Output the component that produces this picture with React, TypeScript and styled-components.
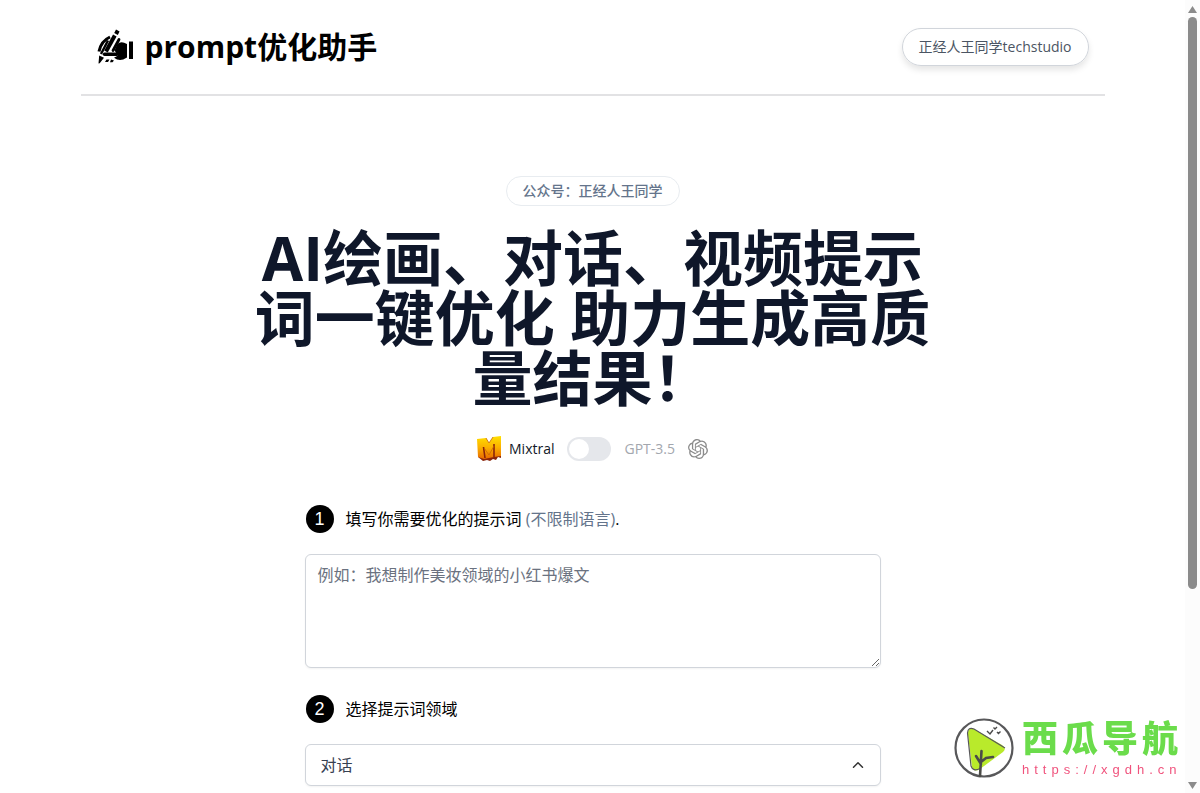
import React, { useState } from "react";
import styled, { createGlobalStyle } from "styled-components";
import { SiOpenai } from "react-icons/si";
import { ChevronUp } from "lucide-react";

const GlobalStyle = createGlobalStyle`
  *, *::before, *::after { box-sizing: border-box; }
  body {
    margin: 0;
    background: #fff;
    color: #000;
    font-family: "Open Sans", "Noto Sans CJK SC", sans-serif;
    font-size: 16px;
    line-height: 24px;
  }
  button, input, textarea, select { font: inherit; color: inherit; }
`;

const Window = styled.div`
  display: flex;
  height: 100vh;
  overflow: hidden;
`;

const Page = styled.div`
  flex: 1;
  min-width: 0;
  display: flex;
  flex-direction: column;
  align-items: center;
`;

const Header = styled.header`
  width: 100%;
  max-width: 1024px;
  display: flex;
  justify-content: space-between;
  align-items: center;
  padding: 28px 16px;
  border-bottom: 2px solid #e2e2e4;
`;

const Brand = styled.a`
  display: flex;
  align-items: center;
  gap: 12px;
  color: #000;
  text-decoration: none;
`;

const BrandName = styled.h1`
  margin: 0;
  font-size: 30px;
  line-height: 38px;
  font-weight: 700;
`;

const StudioLink = styled.a`
  display: flex;
  align-items: center;
  height: 38px;
  padding: 0 16px;
  border: 1px solid #d1d5db;
  border-radius: 999px;
  box-shadow: 0 4px 6px rgba(0, 0, 0, 0.1);
  color: #4b5563;
  font-size: 14px;
  line-height: 20px;
  text-decoration: none;
`;

const Main = styled.main`
  width: 100%;
  display: flex;
  flex-direction: column;
  align-items: center;
  padding: 80px 16px 0;
`;

const AccountPill = styled.p`
  margin: 0 0 22px;
  padding: 4px 16px;
  border: 1px solid #e8ecf0;
  border-radius: 999px;
  color: #64748b;
  font-size: 14px;
  line-height: 20px;
  font-weight: 500;
`;

const Headline = styled.h2`
  margin: 0;
  max-width: 708px;
  color: #0f172a;
  font-size: 60px;
  line-height: 60px;
  font-weight: 700;
  text-align: center;
`;

const ModelPicker = styled.div`
  display: flex;
  align-items: center;
  height: 24px;
  margin-top: 29px;
  gap: 13px;
  font-size: 14px;
`;

const ModelName = styled.label<{ $active: boolean; $gap: number }>`
  display: flex;
  align-items: center;
  gap: ${(p) => p.$gap}px;
  color: ${(p) => (p.$active ? "#111827" : "#a3a7ae")};
  svg { color: #8b8b8b; }
`;

const Switch = styled.input`
  appearance: none;
  width: 44px;
  height: 24px;
  margin: 0;
  padding: 2px;
  border-radius: 12px;
  background: #e5e7eb;
  cursor: pointer;
  &::before {
    content: "";
    display: block;
    width: 20px;
    height: 20px;
    border-radius: 50%;
    background: #fff;
  }
  &:checked::before { margin-left: 20px; }
`;

const Form = styled.form`
  width: 100%;
  max-width: 576px;
  display: flex;
  flex-direction: column;
  margin-top: 44px;
`;

const StepLabel = styled.label`
  display: flex;
  align-items: center;
  gap: 12px;
  height: 28px;
`;

const StepNumber = styled.span`
  display: grid;
  place-items: center;
  width: 28px;
  height: 28px;
  margin-left: 1px;
  border-radius: 50%;
  background: #000;
  color: #fff;
  font-family: "Liberation Sans", sans-serif;
  font-size: 18px;
`;

const Hint = styled.span`
  color: #64748b;
`;

const PromptBox = styled.textarea`
  height: 114px;
  margin: 21px 0 27px;
  padding: 8px 12px;
  border: 1px solid #d1d5db;
  border-radius: 6px;
  background: #fff;
  box-shadow: 0 1px 2px rgba(0, 0, 0, 0.05);
  resize: vertical;
  &::placeholder { color: #6b7280; opacity: 1; }
`;

const SelectWrap = styled.div`
  display: grid;
  align-items: center;
  margin-top: 21px;
  > * { grid-area: 1 / 1; }
  > svg {
    justify-self: end;
    margin-right: 14px;
    pointer-events: none;
  }
`;

const Select = styled.select`
  appearance: none;
  width: 100%;
  height: 42px;
  padding: 0 15px;
  border: 1px solid #d1d5db;
  border-radius: 6px;
  background: #fff;
  box-shadow: 0 1px 2px rgba(0, 0, 0, 0.05);
  color: #374151;
`;

const ScrollTrack = styled.div`
  width: 15px;
  display: flex;
  flex-direction: column;
  align-items: center;
  padding: 6px 0 4px;
  background: #fcfcfc;
`;

const ScrollThumb = styled.div`
  width: 9px;
  height: 73%;
  margin: 4px 0 auto;
  border-radius: 5px;
  background: #8b8b8b;
`;

const SiteBadge = styled.a`
  position: fixed;
  right: 18px;
  bottom: 15px;
  display: flex;
  align-items: center;
  gap: 8px;
  text-decoration: none;
`;

const BadgeText = styled.span`
  display: flex;
  flex-direction: column;
`;

const BadgeName = styled.strong`
  color: #6bdc4b;
  font-family: "Liberation Sans", "Noto Sans CJK SC", sans-serif;
  font-size: 36px;
  line-height: 44px;
  font-weight: 900;
  letter-spacing: 4px;
`;

const BadgeUrl = styled.span`
  color: #f0537d;
  font-family: "Liberation Sans", sans-serif;
  font-size: 13px;
  line-height: 16px;
  letter-spacing: 5px;
`;

const WritingHand = () => (
  <svg width="36" height="36" viewBox="0 0 36 36" aria-hidden="true">
    <g fill="none" stroke="#000">
      <path d="M20.800 1.500L19 5" strokeWidth="4" />
      <path d="M17.800 6.500L9 22.500" strokeWidth="4" />
      <path d="M13 8Q4 12 2 22.500" strokeWidth="3" />
      <path d="M11 11.500L4 25" strokeWidth="2.400" />
      <path d="M22 10.500L16 21.500" strokeWidth="2.800" strokeLinecap="round" />
      <path d="M7.500 25.300H20" strokeWidth="3.400" strokeLinecap="round" />
    </g>
    <path d="M20.500 15q3.500-3.500 9.500 0v13.500q-4 2.500-7 2.500t-6-2.200l4-2.300-3.500-5zM32 12.500h4V30h-4zM2.200 26.500L7 28.700l-4.300 5.600-1.200.2zM9.500 30.500h3l-1.500 2.500H8zM14 30.500l3 1-1.500 1.700H13z" />
  </svg>
);

const MixtralLogo = () => (
  <svg width="24" height="26" viewBox="0 0 24 26" aria-hidden="true">
    <defs>
      <linearGradient id="mixtral" x1="0" y1="0" x2="0" y2="1">
        <stop offset="0" stopColor="#ffe000" />
        <stop offset="0.5" stopColor="#fbb000" />
        <stop offset="1" stopColor="#e86a00" />
      </linearGradient>
    </defs>
    <path d="M1 19l23-3v6l-3-1-2 3-3-1-3 2-3-1-4 1-5-4z" fill="#8a240a" />
    <path d="M0 3l9-1 3 5 4-6 8-1v20l-7 1-5 1-5 1-6-2z" fill="url(#mixtral)" />
    <path d="M6.500 11l1.500 11M17 8v13" fill="none" stroke="#8a240a" strokeWidth="1.600" />
    <path d="M9 2l3 5 4-6M7 12l5 7 5-9" fill="none" stroke="#c86408" strokeWidth="0.800" />
  </svg>
);

const TreeLogo = () => (
  <svg width="60" height="60" viewBox="0 0 60 60" aria-hidden="true">
    <circle cx="30" cy="30" r="28.500" fill="#fff" stroke="#58585a" strokeWidth="2.200" />
    <path d="M20 11l28 16q5 3.500 1 7L26 51q-6 4-8-2L14 17q-.5-9 6-6z" fill="#b9ea2b" />
    <path d="M51 30L20 11q-6-2.500-6.500 4L17 48q2 6 9 2.500" fill="none" stroke="#58585a" strokeWidth="1.200" />
    <path d="M26 58l1.500-25M27 46l-5-8M27 44l5-4 7-1" fill="none" stroke="#4b4b48" strokeWidth="2.600" strokeLinecap="round" />
    <path d="M33 13l3 3 3-4M39.500 9.500l1.500 1.500 2-2M43 14l1.500 1.500 2-2" fill="none" stroke="#4b4b4b" strokeWidth="1.400" />
  </svg>
);

export default function App() {
  const [gpt, setGpt] = useState(false);
  return (
    <>
      <GlobalStyle />
      <Window>
        <Page>
          <Header>
            <Brand href="#">
              <WritingHand />
              <BrandName>prompt优化助手</BrandName>
            </Brand>
            <StudioLink href="#">正经人王同学techstudio</StudioLink>
          </Header>
          <Main>
            <AccountPill>公众号：正经人王同学</AccountPill>
            <Headline>AI绘画、对话、视频提示词一键优化 助力生成高质量结果！</Headline>
            <ModelPicker>
              <ModelName htmlFor="model" $active={!gpt} $gap={8}>
                <MixtralLogo />
                Mixtral
              </ModelName>
              <Switch id="model" type="checkbox" role="switch" checked={gpt} onChange={(e) => setGpt(e.target.checked)} />
              <ModelName htmlFor="model" $active={gpt} $gap={13}>
                GPT-3.5
                <SiOpenai size={20} />
              </ModelName>
            </ModelPicker>
            <Form>
              <StepLabel htmlFor="prompt">
                <StepNumber>1</StepNumber>
                <span>填写你需要优化的提示词 <Hint>(不限制语言)</Hint>.</span>
              </StepLabel>
              <PromptBox id="prompt" placeholder="例如：我想制作美妆领域的小红书爆文" />
              <StepLabel htmlFor="field">
                <StepNumber>2</StepNumber>
                <span>选择提示词领域</span>
              </StepLabel>
              <SelectWrap>
                <Select id="field">
                  <option>对话</option>
                </Select>
                <ChevronUp size={18} color="#333" aria-hidden="true" />
              </SelectWrap>
            </Form>
          </Main>
        </Page>
        <ScrollTrack aria-hidden="true">
          <svg width="9" height="7" viewBox="0 0 9 7"><path d="M4.500 0l4.500 7H0z" fill="#8b8b8b" /></svg>
          <ScrollThumb />
          <svg width="9" height="7" viewBox="0 0 9 7"><path d="M0 0h9l-4.500 7z" fill="#8b8b8b" /></svg>
        </ScrollTrack>
      </Window>
      <SiteBadge href="#">
        <TreeLogo />
        <BadgeText>
          <BadgeName>西瓜导航</BadgeName>
          <BadgeUrl>https://xgdh.cn</BadgeUrl>
        </BadgeText>
      </SiteBadge>
    </>
  );
}
